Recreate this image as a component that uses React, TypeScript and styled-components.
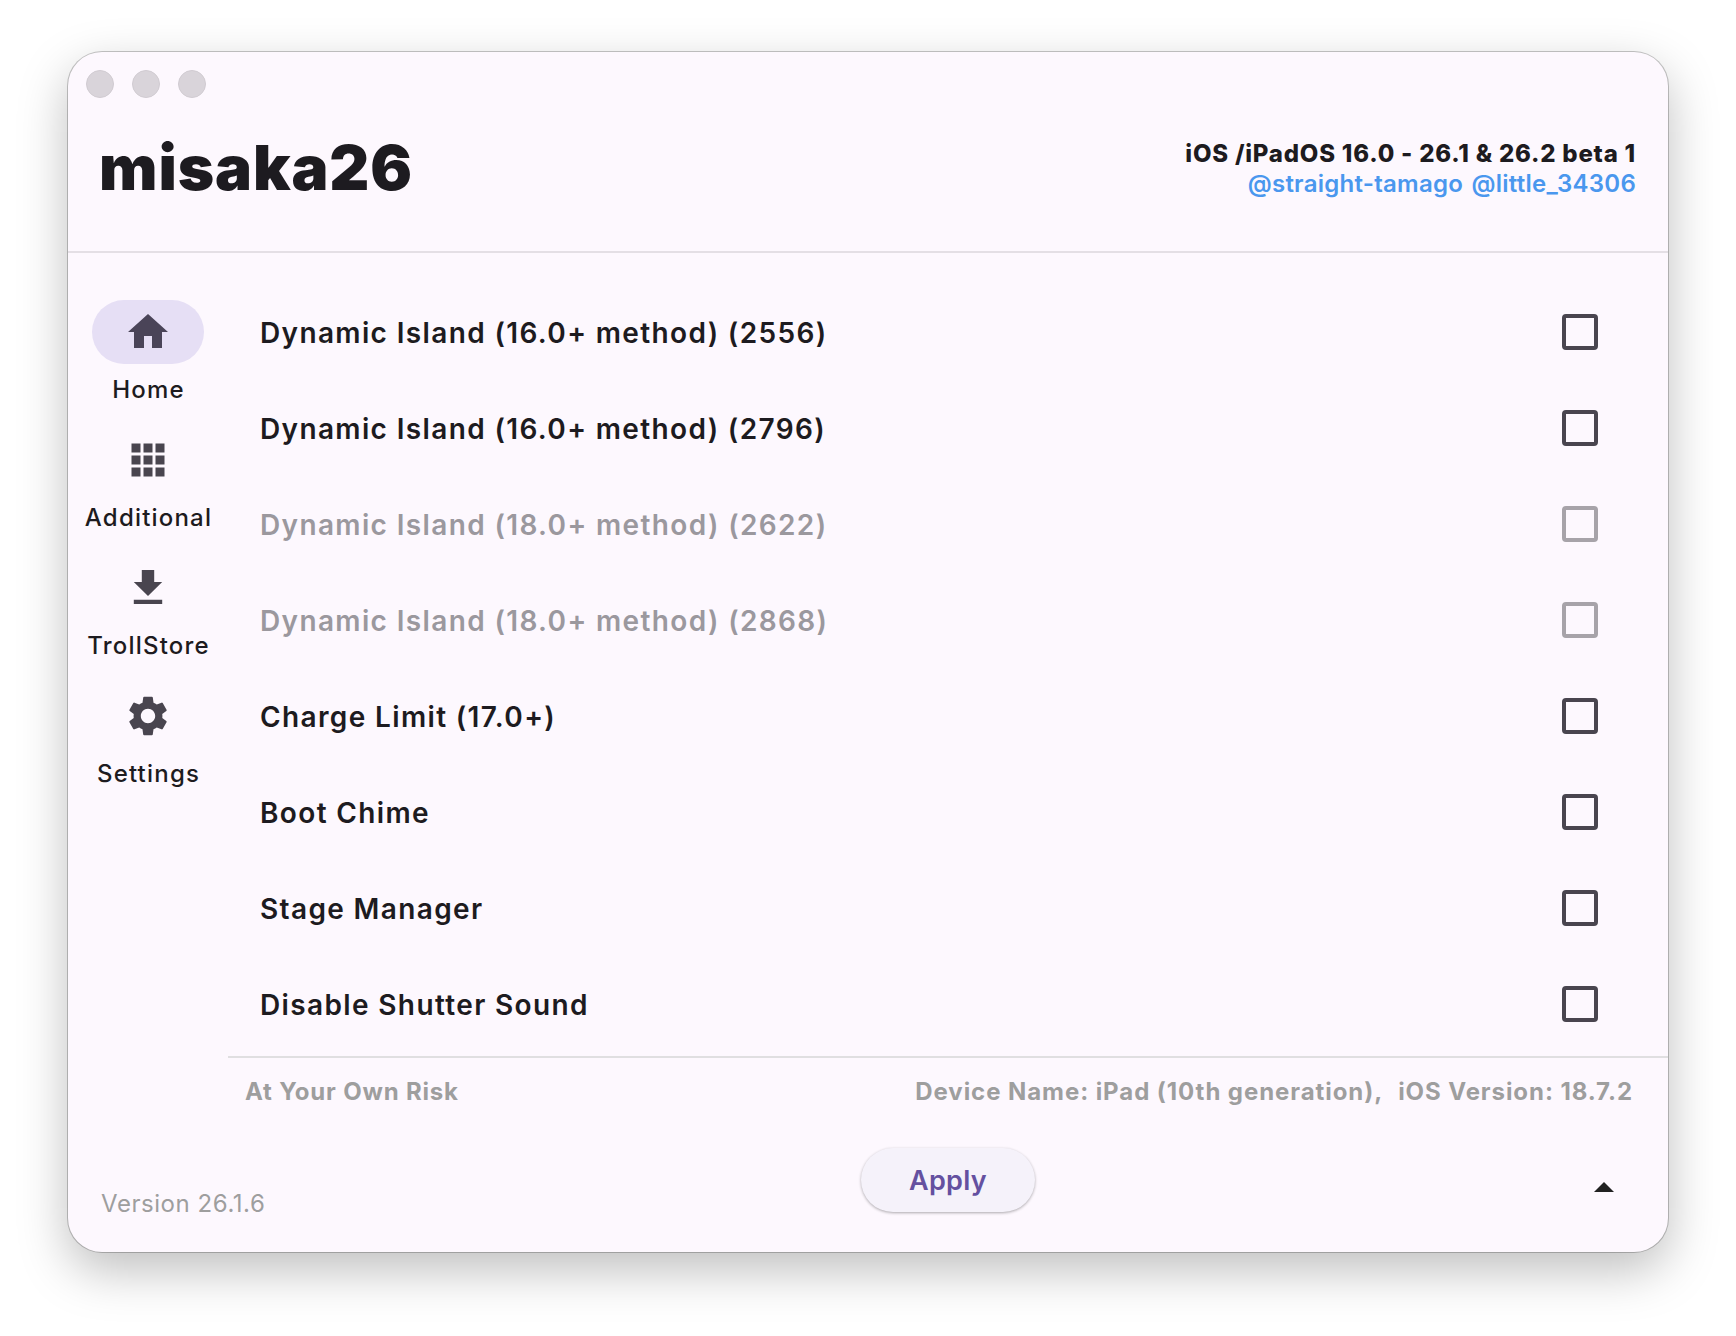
import React from "react";
import styled, { createGlobalStyle } from "styled-components";
import { MdArrowDropUp, MdHome, MdSettings } from "react-icons/md";

const GlobalStyle = createGlobalStyle`
  * {
    box-sizing: border-box;
  }
  body {
    margin: 0;
    background: #ffffff;
    color: #1d1b20;
    font-family: Inter, "Liberation Sans", sans-serif;
  }
`;
const Desktop = styled.div`
  height: 1336px;
  padding: 52px 68px 84px;
`;
const Window = styled.div`
  display: flex;
  flex-direction: column;
  height: 1200px;
  overflow: hidden;
  border-radius: 34px;
  background: #fdf8fe;
  box-shadow: 0 0 0 1px rgba(0, 0, 0, 0.22), 0 18px 50px rgba(0, 0, 0, 0.26);
`;
const TitleBar = styled.div`
  display: flex;
  align-items: center;
  gap: 18px;
  height: 64px;
  padding-left: 18px;
`;
const TrafficLight = styled.span`
  width: 28px;
  height: 28px;
  border: 1px solid #d0cbd1;
  border-radius: 50%;
  background: #d9d4da;
`;
const Header = styled.header`
  display: flex;
  justify-content: space-between;
  align-items: flex-start;
  height: 137px;
  padding: 20px 32px 0 31px;
  border-bottom: 2px solid #e4dfe5;
`;
const AppName = styled.h1`
  margin: 0;
  font-size: 62px;
  font-weight: 900;
  line-height: 64px;
  letter-spacing: 0.9px;
`;
const HeaderInfo = styled.div`
  padding-top: 3px;
  text-align: right;
  font-size: 24px;
  line-height: 30px;
`;
const Supported = styled.div`
  font-weight: 800;
  letter-spacing: 0.78px;
`;
const Authors = styled.div`
  color: #4a97ee;
  font-weight: 600;
  letter-spacing: 0.26px;
  word-spacing: 2px;
`;
const Body = styled.div`
  display: flex;
  flex: 1;
`;
const Rail = styled.nav`
  display: flex;
  flex-direction: column;
  gap: 22px;
  width: 160px;
  padding: 47px 0 33px;
`;
const RailItem = styled.div`
  display: flex;
  flex-direction: column;
  align-items: center;
  gap: 10px;
`;
const Indicator = styled.div<{ $active?: boolean }>`
  display: flex;
  align-items: center;
  justify-content: center;
  width: 112px;
  height: 64px;
  border-radius: 32px;
  background: ${({ $active }) => ($active ? "#e6dff5" : "transparent")};
  color: ${({ $active }) => ($active ? "#4a4458" : "#49454f")};
`;
const RailLabel = styled.span`
  padding-left: 1px;
  font-size: 24px;
  font-weight: 500;
  line-height: 32px;
  letter-spacing: 1.2px;
`;
const Version = styled.div`
  margin-top: auto;
  padding-left: 33px;
  color: #9e9e9e;
  font-size: 24px;
  line-height: 30px;
  letter-spacing: 0.55px;
  white-space: nowrap;
`;
const Main = styled.main`
  display: flex;
  flex: 1;
  flex-direction: column;
`;
const TweakList = styled.div`
  height: 805px;
  padding: 31px 70px 0 32px;
  border-bottom: 2px solid #e0dfe1;
`;
const TweakRow = styled.div<{ $disabled?: boolean }>`
  display: flex;
  align-items: center;
  justify-content: space-between;
  height: 96px;
  color: ${({ $disabled }) => ($disabled ? "#9b989e" : "#1d1b20")};
`;
const TweakName = styled.span`
  padding-top: 2px;
  font-size: 28px;
  font-weight: 600;
  line-height: 40px;
  letter-spacing: 1.36px;
`;
const Checkbox = styled.span<{ $disabled?: boolean }>`
  width: 36px;
  height: 36px;
  border: 4px solid ${({ $disabled }) => ($disabled ? "#a7a3a9" : "#49454f")};
  border-radius: 4px;
`;
const StatusBar = styled.div`
  display: flex;
  justify-content: space-between;
  padding: 19px 35px 0 17px;
  color: #9e9e9e;
  font-size: 24px;
  font-weight: 700;
  line-height: 30px;
  letter-spacing: 0.93px;
`;
const RiskNote = styled.span`
  letter-spacing: 0.8px;
`;
const DeviceInfo = styled.div`
  display: flex;
  gap: 15px;
`;
const ActionBar = styled.div`
  display: grid;
  grid-template-columns: 1fr auto 1fr;
  padding: 41px 40px 0;
`;
const ApplyButton = styled.button`
  grid-column: 2;
  width: 174px;
  height: 64px;
  padding: 0;
  border: 0;
  border-radius: 32px;
  background: #f5f2fa;
  box-shadow: 0 1px 3px rgba(0, 0, 0, 0.32);
  color: #6450a0;
  font: 600 27px Inter, "Liberation Sans", sans-serif;
  letter-spacing: 0.25px;
`;
const LogToggle = styled.div`
  justify-self: end;
  height: 48px;
  margin-top: 16px;
  color: #212121;
`;

const AppsIcon = () => (
  <svg width="48" height="48" viewBox="0 0 24 24" fill="currentColor">
    {[3.75, 9.75, 15.75].map((y) =>
      [3.75, 9.75, 15.75].map((x) => (
        <rect key={`${x}-${y}`} x={x} y={y} width="4.5" height="4.5" />
      ))
    )}
  </svg>
);

const DownloadIcon = () => (
  <svg width="48" height="48" viewBox="0 0 24 24" fill="currentColor">
    <path d="M19.1 9H15.1V3H8.9v6H4.9l7.1 7 7.1-7zM4.9 17.9V20h14.2v-2.1H4.9z" />
  </svg>
);

interface Tweak {
  name: string;
  disabled?: boolean;
}

const navigation = [
  { label: "Home", icon: <MdHome size={48} />, active: true },
  { label: "Additional", icon: <AppsIcon /> },
  { label: "TrollStore", icon: <DownloadIcon /> },
  { label: "Settings", icon: <MdSettings size={48} /> },
];

const tweaks: Tweak[] = [
  { name: "Dynamic Island (16.0+ method) (2556)" },
  { name: "Dynamic Island (16.0+ method) (2796)" },
  { name: "Dynamic Island (18.0+ method) (2622)", disabled: true },
  { name: "Dynamic Island (18.0+ method) (2868)", disabled: true },
  { name: "Charge Limit (17.0+)" },
  { name: "Boot Chime" },
  { name: "Stage Manager" },
  { name: "Disable Shutter Sound" },
];

const App = () => {
  return (
    <>
      <GlobalStyle />
      <Desktop>
        <Window>
          <TitleBar>
            <TrafficLight />
            <TrafficLight />
            <TrafficLight />
          </TitleBar>
          <Header>
            <AppName>misaka26</AppName>
            <HeaderInfo>
              <Supported>iOS /iPadOS 16.0 - 26.1 &amp; 26.2 beta 1</Supported>
              <Authors>@straight-tamago @little_34306</Authors>
            </HeaderInfo>
          </Header>
          <Body>
            <Rail>
              {navigation.map((v) => (
                <RailItem key={v.label}>
                  <Indicator $active={v.active}>{v.icon}</Indicator>
                  <RailLabel>{v.label}</RailLabel>
                </RailItem>
              ))}
              <Version>Version 26.1.6</Version>
            </Rail>
            <Main>
              <TweakList>
                {tweaks.map((v) => (
                  <TweakRow key={v.name} $disabled={v.disabled}>
                    <TweakName>{v.name}</TweakName>
                    <Checkbox $disabled={v.disabled} />
                  </TweakRow>
                ))}
              </TweakList>
              <StatusBar>
                <RiskNote>At Your Own Risk</RiskNote>
                <DeviceInfo>
                  <span>Device Name: iPad (10th generation),</span>
                  <span>iOS Version: 18.7.2</span>
                </DeviceInfo>
              </StatusBar>
              <ActionBar>
                <ApplyButton>Apply</ApplyButton>
                <LogToggle>
                  <MdArrowDropUp size={48} />
                </LogToggle>
              </ActionBar>
            </Main>
          </Body>
        </Window>
      </Desktop>
    </>
  );
};

export default App;
